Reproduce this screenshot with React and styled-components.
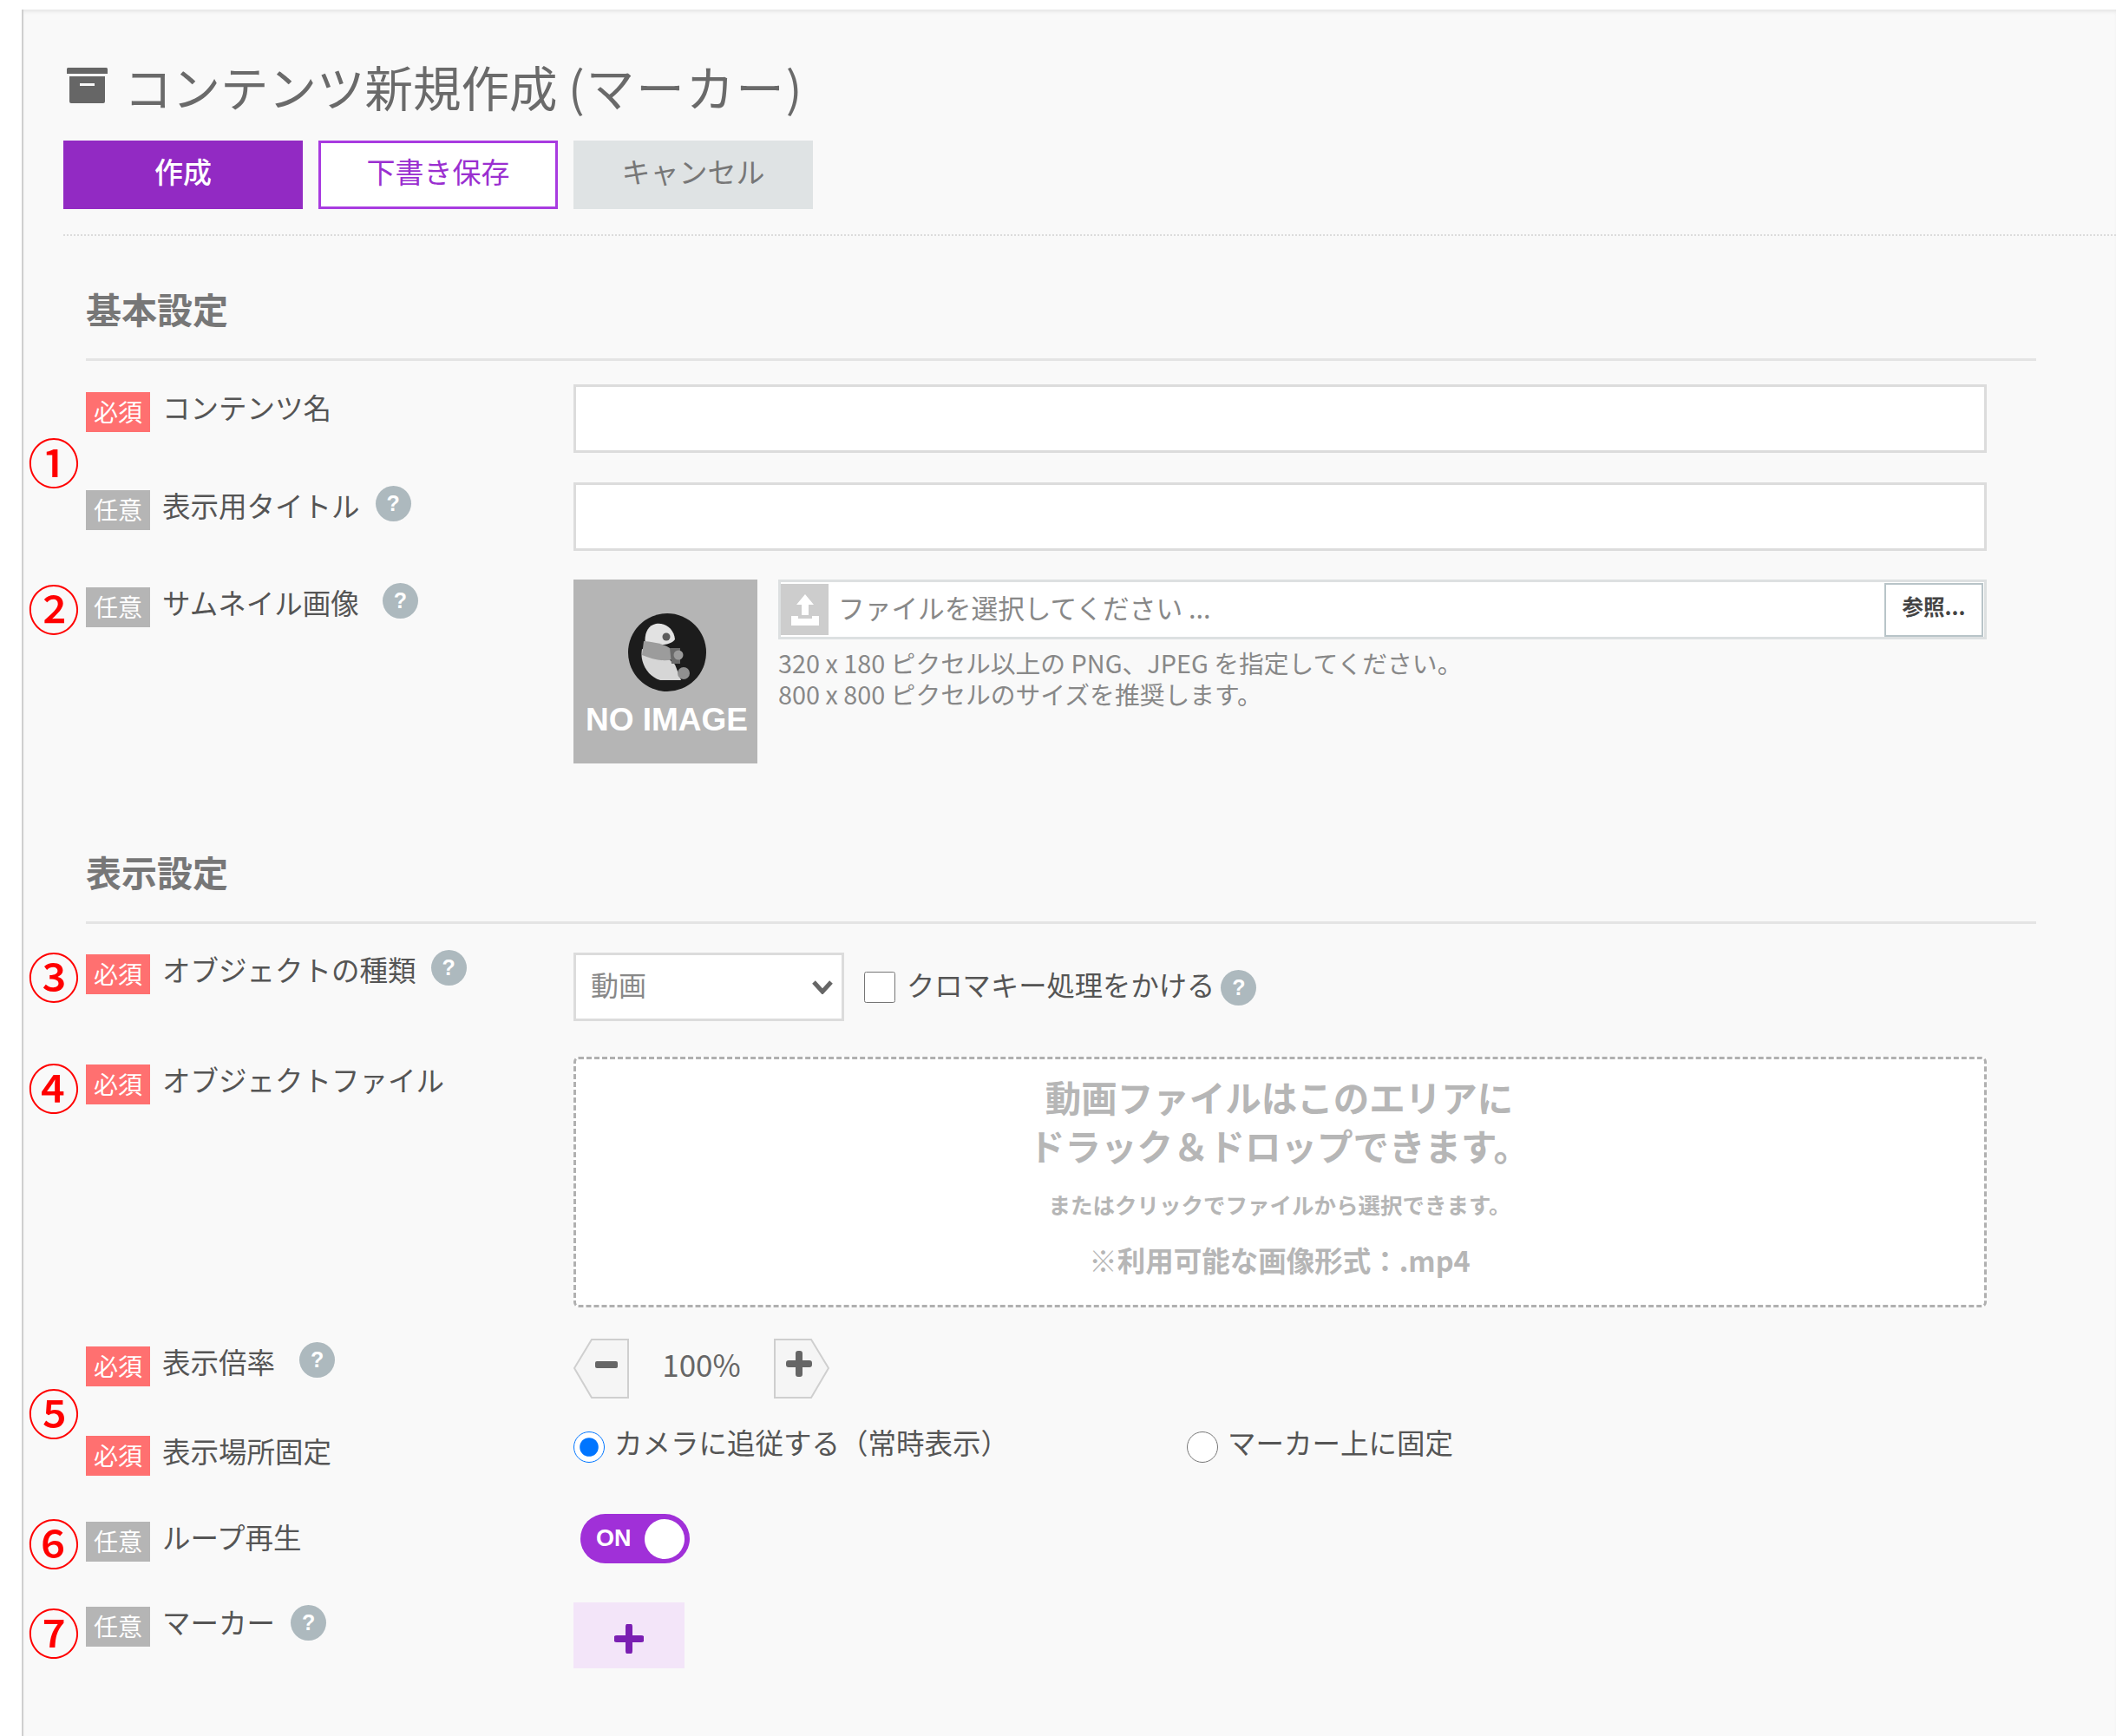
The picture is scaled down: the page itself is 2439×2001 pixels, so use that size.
import React from "react";
import styled, { createGlobalStyle } from "styled-components";

const Global = createGlobalStyle`
  html, body { margin: 0; padding: 0; background: #fff; }
  body { font-family: "Noto Sans CJK JP", "Noto Sans", "Liberation Sans", sans-serif; color: #555; }
  * { box-sizing: border-box; }
`;

const Shell = styled.div`
  width: 2439px;
  height: 2001px;
  padding: 11px 0 0 25px;
  overflow: hidden;
  background: #fff;
`;
const Main = styled.main`
  height: 100%;
  background: #f9f9f9;
  border-left: 2px solid #cfcfcf;
  box-shadow: inset 0 4px 4px -2px #e2e2e2;
  padding-left: 46px;
`;
const Header = styled.header`
  padding: 56px 0 29px;
  border-bottom: 2px dotted #dcdcdc;
`;
const Title = styled.h1`
  display: flex;
  align-items: center;
  gap: 19px;
  margin: 0 0 31px 4px;
  height: 64px;
  font-size: 55.5px;
  line-height: 64px;
  font-weight: 400;
  color: #6a6a6a;
  white-space: nowrap;
  svg { margin-top: -2px; }
`;
const TitleTail = styled.span`
  letter-spacing: 2px;
`;
const Buttons = styled.div`
  display: flex;
  gap: 18px;
`;
const Button = styled.button`
  width: 276px;
  height: 79px;
  padding: 0 0 9px;
  font: ${(p) => (p.$kind === "primary" ? 500 : 400)} 33px/1 "Noto Sans CJK JP", sans-serif;
  color: ${(p) => ({ primary: "#fff", outline: "#9a2fd0", plain: "#777" })[p.$kind]};
  background: ${(p) => ({ primary: "#922ac3", outline: "#fff", plain: "#dfe3e4" })[p.$kind]};
  border: ${(p) => (p.$kind === "outline" ? "3px solid #a83be0" : "0")};
`;
const Section = styled.section`
  width: 2248px;
  margin-left: 26px;
`;
const Heading = styled.h2`
  margin: ${(p) => p.$top}px 0 0;
  padding: 0 0 30px;
  border-bottom: 3px solid #e4e4e4;
  font-size: 41px;
  line-height: 56px;
  font-weight: 700;
  color: #777;
`;
const Row = styled.div`
  position: relative;
  display: grid;
  grid-template-columns: 562px 1629px;
  margin-top: ${(p) => p.$top}px;
`;
const LabelCell = styled.div`
  display: flex;
  align-items: flex-start;
  padding-top: ${(p) => p.$pad ?? 9}px;
`;
const Badge = styled.span`
  flex: none;
  display: flex;
  align-items: center;
  justify-content: center;
  width: 74px;
  height: 46px;
  padding-bottom: 3px;
  font-size: 28px;
  line-height: 1;
  color: #fff;
  background: ${(p) => (p.$required ? "#ff7070" : "#b5b5b5")};
`;
const LabelText = styled.span`
  margin: -3px 0 0 14px;
  font-size: 32.5px;
  line-height: 40px;
  color: #555;
  white-space: nowrap;
`;
const Help = styled.span`
  flex: none;
  display: flex;
  align-items: center;
  justify-content: center;
  width: 41px;
  height: 41px;
  margin: ${(p) => -(p.$lift ?? 5)}px 0 0 ${(p) => p.$gap}px;
  border-radius: 50%;
  background: #adb9be;
  color: #fff;
  font: 700 25px/1 "Liberation Sans", sans-serif;
`;
const Mark = styled.span`
  position: absolute;
  left: -70px;
  top: ${(p) => p.$top}px;
  width: 66px;
  height: 54px;
  display: flex;
  align-items: center;
  justify-content: center;
  font-size: 60px;
  font-weight: 500;
  line-height: 54px;
  color: #f00;
`;
const TextInput = styled.input`
  display: block;
  width: 100%;
  height: 79px;
  background: #fff;
  border: 3px solid #dcdcdc;
  outline: 0;
`;
const Thumb = styled.div`
  flex: none;
  display: flex;
  flex-direction: column;
  align-items: center;
  width: 212px;
  height: 212px;
  padding: 38px 0 0 3px;
  background: #b5b5b5;
`;
const ThumbCaption = styled.span`
  margin-top: 10px;
  font: 700 37px/44px "Liberation Sans", sans-serif;
  color: #fff;
  white-space: nowrap;
`;
const FileCell = styled.div`
  display: flex;
  gap: 24px;
`;
const FileBody = styled.div`
  flex: 1;
`;
const FileBox = styled.div`
  display: flex;
  align-items: center;
  height: 69px;
  padding: 2px 1px 2px 0;
  background: #fff;
  border: 3px solid #dde0e1;
`;
const UploadTile = styled.span`
  flex: none;
  display: flex;
  align-items: center;
  justify-content: center;
  width: 55px;
  height: 59px;
  background: #cdcdcd;
`;
const FilePlaceholder = styled.span`
  flex: 1;
  margin: -7px 0 0 11px;
  font-size: 30.7px;
  color: #888;
  white-space: nowrap;
`;
const BrowseButton = styled.button`
  flex: none;
  width: 114px;
  height: 62px;
  padding: 0 0 6px;
  background: #fff;
  border: 2px solid #b8c4c8;
  font: 700 24.5px/1 "Noto Sans CJK JP", sans-serif;
  color: #444;
`;
const Hint = styled.p`
  margin: 9px 0 0;
  font-size: 28.8px;
  line-height: 35.5px;
  color: #888;
  white-space: nowrap;
`;
const InlineCell = styled.div`
  display: flex;
  align-items: center;
`;
const SelectWrap = styled.div`
  position: relative;
  flex: none;
  width: 312px;
  height: 79px;
`;
const Select = styled.select`
  width: 100%;
  height: 100%;
  padding: 0 0 7px 17px;
  appearance: none;
  background: #fff;
  border: 3px solid #dcdcdc;
  border-radius: 0;
  font: 400 32px "Noto Sans CJK JP", sans-serif;
  color: #888;
`;
const Chevron = styled.svg`
  position: absolute;
  right: 13px;
  top: 32px;
  pointer-events: none;
`;
const Check = styled.input`
  flex: none;
  width: 36px;
  height: 36px;
  margin: 0 13px 0 23px;
`;
const CheckText = styled.span`
  margin-top: -7px;
  font-size: 32.3px;
  line-height: 40px;
  color: #555;
  white-space: nowrap;
`;
const CheckHelp = styled(Help)`
  margin: 2px 0 0 7px;
`;
const Drop = styled.div`
  height: 289px;
  padding-top: 15px;
  background: #fff;
  border: 3px dashed #b0b0b0;
  border-radius: 6px;
  text-align: center;
  font-weight: 700;
  color: #b6b6b6;
`;
const DropTitle = styled.div`
  margin-left: -2px;
  font-size: 41.5px;
  line-height: 56px;
`;
const DropSub = styled.div`
  margin: 22px 0 0 -1px;
  font-size: 25.5px;
  line-height: 36px;
`;
const DropFormats = styled.div`
  margin: 23px 0 0 -1px;
  font-size: 32.5px;
  line-height: 46px;
`;
const Stepper = styled.div`
  display: flex;
  align-items: center;
  height: 69px;
`;
const StepButton = styled.button`
  display: block;
  width: 64px;
  height: 69px;
  padding: 0;
  background: none;
  border: 0;
`;
const StepValue = styled.span`
  width: 167px;
  margin-top: -12px;
  text-align: center;
  font-size: 35px;
  line-height: 1;
  color: #666;
`;
const RadioGroup = styled.div`
  display: flex;
  align-items: flex-start;
  height: 60px;
  padding-top: 4px;
`;
const RadioLabel = styled.label`
  display: flex;
  align-items: center;
  width: ${(p) => p.$width}px;
  color: #555;
  white-space: nowrap;
`;
const RadioText = styled.span`
  margin-top: -12px;
  font-size: 32.5px;
  line-height: 36px;
`;
const Radio = styled.input`
  flex: none;
  width: 36px;
  height: 36px;
  margin: 0 11px 0 0;
`;
const Toggle = styled.div`
  display: flex;
  align-items: center;
  justify-content: space-between;
  width: 126px;
  height: 57px;
  margin-left: 8px;
  padding: 0 6px 0 18px;
  border-radius: 29px;
  background: #a030d8;
  color: #fff;
  font: 700 27px/1 "Liberation Sans", sans-serif;
`;
const Knob = styled.span`
  width: 46px;
  height: 46px;
  border-radius: 50%;
  background: #fff;
`;
const AddMarker = styled.button`
  display: flex;
  align-items: center;
  justify-content: center;
  width: 128px;
  height: 76px;
  padding: 8px 0 0;
  background: #f3e5f9;
  border: 0;
`;

const BoxIcon = () => (
  <svg width="47" height="41" viewBox="0 0 47 41" aria-hidden="true">
    <path d="M0 1.5a1.5 1.5 0 0 1 1.5-1.5h44a1.5 1.5 0 0 1 1.5 1.5V7H0z" fill="#666" />
    <path fillRule="evenodd" d="M3 10h41v29a2 2 0 0 1-2 2H5a2 2 0 0 1-2-2zM15 18v3h17v-3z" fill="#666" />
  </svg>
);
const Panda = () => (
  <svg width="92" height="92" viewBox="-46 -46 92 92" aria-hidden="true">
    <circle r="45" fill="#1c1c1c" />
    <path d="M-29 -4C-32 12-22 28-8 32L16 32L9 14L0 6Z" fill="#d6d6d6" />
    <path d="M-13 -33C-2 -35 8 -27 9 -15C6 -11 0 -9-6 -9L-25 -9C-27 -20-23 -31-13 -33Z" fill="#e2e2e2" />
    <path d="M-27 -13C-15 -12 0 -9 4 -4L6 8C-5 11-17 8-29 3Z" fill="#9c9c9c" />
    <circle cx="-1" cy="-18" r="4.5" fill="#5a5a5a" />
    <path d="M3 -5L15 -5L15 13L5 13Z" fill="#6a6a6a" />
    <circle cx="13" cy="3" r="5.5" fill="#9b9b9b" />
    <circle cx="19" cy="24" r="7" fill="#8f8f8f" />
  </svg>
);
const UploadIcon = () => (
  <svg width="32" height="36" viewBox="0 0 32 36" aria-hidden="true">
    <path d="M16 0L26 12H20V24H12V12H6Z" fill="#fff" />
    <path d="M0 25H8V28H24V25H32V36H0Z" fill="#fff" />
  </svg>
);
const StepShape = ({ flip, plus }) => (
  <svg width="64" height="69" viewBox="0 0 64 69" aria-hidden="true">
    <g transform={flip ? "translate(64 0) scale(-1 1)" : undefined}>
      <path d="M21 1H63V68H21L1 34Z" fill="#f5f5f5" stroke="#cfcfcf" strokeWidth="2" />
    </g>
    {plus ? (
      <path d="M25 26V18a3 3 0 0 1 3-3h2a3 3 0 0 1 3 3v8h8a3 3 0 0 1 3 3v2a3 3 0 0 1-3 3h-8v8a3 3 0 0 1-3 3h-2a3 3 0 0 1-3-3v-8h-8a3 3 0 0 1-3-3v-2a3 3 0 0 1 3-3Z" transform="translate(0 -1)" fill="#666" />
    ) : (
      <rect x="25" y="26" width="26" height="8" rx="2" fill="#666" />
    )}
  </svg>
);
const PlusIcon = () => (
  <svg width="34" height="34" viewBox="0 0 34 34" aria-hidden="true">
    <path d="M13 13V3a4 4 0 0 1 8 0v10h10a4 4 0 0 1 0 8H21v10a4 4 0 0 1-8 0V21H3a4 4 0 0 1 0-8Z" fill="#7a1fb2" />
  </svg>
);

const Label = ({ required, children, help, lift }) => (
  <>
    <Badge $required={required}>{required ? "必須" : "任意"}</Badge>
    <LabelText>{children}</LabelText>
    {help !== undefined && <Help $gap={help} $lift={lift}>?</Help>}
  </>
);

export default function App() {
  return (
    <Shell>
      <Global />
      <Main>
        <Header>
          <Title>
            <BoxIcon />
            <span>
              コンテンツ新規作成 <TitleTail>(マーカー)</TitleTail>
            </span>
          </Title>
          <Buttons>
            <Button $kind="primary">作成</Button>
            <Button $kind="outline">下書き保存</Button>
            <Button $kind="plain">キャンセル</Button>
          </Buttons>
        </Header>

        <Section>
          <Heading $top={55}>基本設定</Heading>
          <Row $top={27}>
            <LabelCell>
              <Label required>コンテンツ名</Label>
            </LabelCell>
            <TextInput />
          </Row>
          <Row $top={34}>
            <Mark $top={-52}>①</Mark>
            <LabelCell>
              <Label help={18}>表示用タイトル</Label>
            </LabelCell>
            <TextInput />
          </Row>
          <Row $top={33}>
            <Mark $top={5}>②</Mark>
            <LabelCell>
              <Label help={27}>サムネイル画像</Label>
            </LabelCell>
            <FileCell>
              <Thumb>
                <Panda />
                <ThumbCaption>NO IMAGE</ThumbCaption>
              </Thumb>
              <FileBody>
                <FileBox>
                  <UploadTile>
                    <UploadIcon />
                  </UploadTile>
                  <FilePlaceholder>ファイルを選択してください ...</FilePlaceholder>
                  <BrowseButton>参照...</BrowseButton>
                </FileBox>
                <Hint>
                  320 x 180 ピクセル以上の PNG、JPEG を指定してください。
                  <br />
                  800 x 800 ピクセルのサイズを推奨します。
                </Hint>
              </FileBody>
            </FileCell>
          </Row>

          <Heading $top={96}>表示設定</Heading>
          <Row $top={33}>
            <Mark $top={-1}>③</Mark>
            <LabelCell $pad={2}>
              <Label required help={17}>オブジェクトの種類</Label>
            </LabelCell>
            <InlineCell>
              <SelectWrap>
                <Select defaultValue="動画">
                  <option>動画</option>
                </Select>
                <Chevron width="24" height="16" viewBox="0 0 24 16" aria-hidden="true">
                  <path d="M2 2L12 13L22 2" fill="none" stroke="#666" strokeWidth="5" />
                </Chevron>
              </SelectWrap>
              <Check type="checkbox" />
              <CheckText>クロマキー処理をかける</CheckText>
              <CheckHelp>?</CheckHelp>
            </InlineCell>
          </Row>
          <Row $top={41}>
            <Mark $top={7}>④</Mark>
            <LabelCell>
              <Label required>オブジェクトファイル</Label>
            </LabelCell>
            <Drop>
              <DropTitle>
                動画ファイルはこのエリアに
                <br />
                ドラック＆ドロップできます。
              </DropTitle>
              <DropSub>またはクリックでファイルから選択できます。</DropSub>
              <DropFormats>※利用可能な画像形式：.mp4</DropFormats>
            </Drop>
          </Row>
          <Row $top={36}>
            <LabelCell>
              <Label required help={28}>表示倍率</Label>
            </LabelCell>
            <Stepper>
              <StepButton aria-label="minus">
                <StepShape />
              </StepButton>
              <StepValue>100%</StepValue>
              <StepButton aria-label="plus">
                <StepShape flip plus />
              </StepButton>
            </Stepper>
          </Row>
          <Row $top={34}>
            <Mark $top={-46}>⑤</Mark>
            <LabelCell>
              <Label required>表示場所固定</Label>
            </LabelCell>
            <RadioGroup>
              <RadioLabel $width={707}>
                <Radio type="radio" name="place" defaultChecked />
                <RadioText>カメラに追従する（常時表示）</RadioText>
              </RadioLabel>
              <RadioLabel $width={320}>
                <Radio type="radio" name="place" />
                <RadioText>マーカー上に固定</RadioText>
              </RadioLabel>
            </RadioGroup>
          </Row>
          <Row $top={39}>
            <Mark $top={5}>⑥</Mark>
            <LabelCell>
              <Label>ループ再生</Label>
            </LabelCell>
            <div>
              <Toggle>
                ON
                <Knob />
              </Toggle>
            </div>
          </Row>
          <Row $top={45}>
            <Mark $top={6}>⑦</Mark>
            <LabelCell $pad={5}>
              <Label help={18} lift={2}>マーカー</Label>
            </LabelCell>
            <div>
              <AddMarker aria-label="add">
                <PlusIcon />
              </AddMarker>
            </div>
          </Row>
        </Section>
      </Main>
    </Shell>
  );
}
